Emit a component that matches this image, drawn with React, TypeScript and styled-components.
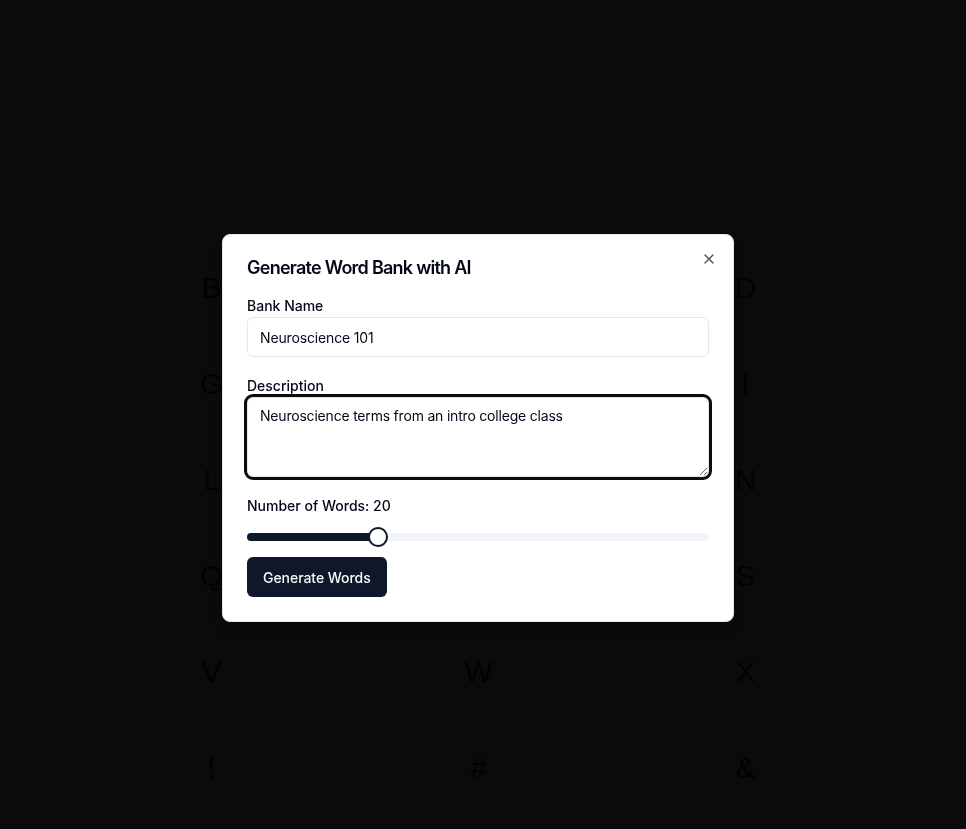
import React from "react";
import styled, { createGlobalStyle } from "styled-components";
import { X } from "lucide-react";

const GlobalStyle = createGlobalStyle`
  *, *::before, *::after { box-sizing: border-box; }
  html, body { margin: 0; padding: 0; }
  body {
    background: #0b0b0b;
    font-family: Inter, "Liberation Sans", Arial, sans-serif;
    overflow: hidden;
  }
`;

const Page = styled.div`
  position: relative;
  width: 100vw;
  height: 100vh;
  overflow: hidden;
  background: #0b0b0b;
`;

const LetterGrid = styled.div`
  display: grid;
  grid-template-columns: repeat(3, 267px);
  grid-auto-rows: 96px;
  padding-top: 240px;
  margin-left: 78px;
`;

const Letter = styled.div`
  display: flex;
  align-items: center;
  justify-content: center;
  font-family: "Liberation Sans", Arial, sans-serif;
  font-size: 30px;
  color: #020202;
`;

const Overlay = styled.div`
  position: fixed;
  inset: 0;
  display: flex;
  justify-content: center;
  align-items: flex-start;
  padding-top: 234px;
  padding-right: 10px;
`;

const Dialog = styled.div`
  position: relative;
  width: 512px;
  background: #ffffff;
  border: 1px solid #e2e8f0;
  border-radius: 8px;
  padding: 24px;
  box-shadow: 0 10px 15px -3px rgba(0, 0, 0, 0.1), 0 4px 6px -4px rgba(0, 0, 0, 0.1);
  color: #020817;
`;

const CloseButton = styled.button`
  position: absolute;
  top: 16px;
  right: 16px;
  width: 16px;
  height: 16px;
  padding: 0;
  border: 0;
  background: transparent;
  color: #020817;
  opacity: 0.7;
  display: flex;
  align-items: center;
  justify-content: center;
  cursor: pointer;
`;

const Title = styled.h2`
  margin: 0;
  font-size: 18px;
  font-weight: 600;
  line-height: 18px;
  letter-spacing: -0.75px;
`;

const Form = styled.form`
  display: flex;
  flex-direction: column;
  gap: 22px;
  margin-top: 22px;
`;

const Field = styled.div`
  display: flex;
  flex-direction: column;
  gap: 4px;
`;

const Label = styled.label<{ $mb?: number }>`
  font-size: 14px;
  font-weight: 500;
  line-height: 14px;
  color: #020817;
  margin-bottom: ${(p) => p.$mb ?? 0}px;
`;

const Input = styled.input`
  height: 40px;
  width: 100%;
  border: 1px solid #e2e8f0;
  border-radius: 6px;
  padding: 8px 12px;
  font-family: inherit;
  font-size: 14px;
  line-height: 20px;
  letter-spacing: -0.15px;
  color: #020817;
  background: #ffffff;
  outline: none;
`;

const TextArea = styled.textarea`
  height: 80px;
  width: 100%;
  border: 1px solid #e2e8f0;
  border-radius: 6px;
  padding: 8px 12px;
  font-family: inherit;
  font-size: 14px;
  line-height: 20px;
  letter-spacing: -0.2px;
  color: #020817;
  background: #ffffff;
  outline: 3px solid #0c0c0c;
  outline-offset: 0;
  display: block;
`;

const SliderBlock = styled.div`
  display: flex;
  flex-direction: column;
`;

const SliderRoot = styled.div`
  position: relative;
  height: 20px;
  display: flex;
  align-items: center;
  width: 100%;
`;

const Track = styled.div`
  position: relative;
  flex: 1;
  height: 8px;
  border-radius: 9999px;
  background: #f1f5f9;
  overflow: hidden;
`;

const Range = styled.div`
  position: absolute;
  left: 0;
  top: 0;
  bottom: 0;
  background: #0f172a;
`;

const Thumb = styled.span`
  position: absolute;
  top: 0;
  width: 20px;
  height: 20px;
  border-radius: 50%;
  border: 2px solid #0f172a;
  background: #ffffff;
  transform: translateX(-50%);
`;

const PrimaryButton = styled.button`
  align-self: flex-start;
  margin-top: 10px;
  height: 40px;
  padding: 0 16px;
  border: 0;
  border-radius: 6px;
  background: #0f172a;
  color: #f8fafc;
  font-family: inherit;
  font-size: 14px;
  font-weight: 500;
  letter-spacing: -0.05px;
  cursor: pointer;
`;

const rows = [
  ["B", "C", "D"],
  ["G", "H", "I"],
  ["L", "M", "N"],
  ["Q", "R", "S"],
  ["V", "W", "X"],
  ["!", "#", "&"],
];

export default function App() {
  const min = 5;
  const max = 60;
  const value = 20;
  const pct = (value - min) / (max - min);
  const thumbOffset = 10 - pct * 20;

  return (
    <>
      <GlobalStyle />
      <Page>
        <LetterGrid>
          {rows.flat().map((ch, i) => (
            <Letter key={i}>{ch}</Letter>
          ))}
        </LetterGrid>
        <Overlay>
          <Dialog role="dialog">
            <Title>Generate Word Bank with AI</Title>
            <CloseButton aria-label="Close">
              <X size={16} strokeWidth={2} />
            </CloseButton>
            <Form onSubmit={(e) => e.preventDefault()}>
              <Field>
                <Label htmlFor="bank">Bank Name</Label>
                <Input id="bank" defaultValue="Neuroscience 101" />
              </Field>
              <Field>
                <Label htmlFor="desc">Description</Label>
                <TextArea
                  id="desc"
                  defaultValue="Neuroscience terms from an intro college class"
                />
              </Field>
              <SliderBlock>
                <Label $mb={14}>Number of Words: {value}</Label>
                <SliderRoot>
                  <Track>
                    <Range style={{ width: `${pct * 100}%` }} />
                  </Track>
                  <Thumb
                    style={{ left: `calc(${pct * 100}% + ${thumbOffset}px)` }}
                  />
                </SliderRoot>
                <PrimaryButton type="submit">Generate Words</PrimaryButton>
              </SliderBlock>
            </Form>
          </Dialog>
        </Overlay>
      </Page>
    </>
  );
}
